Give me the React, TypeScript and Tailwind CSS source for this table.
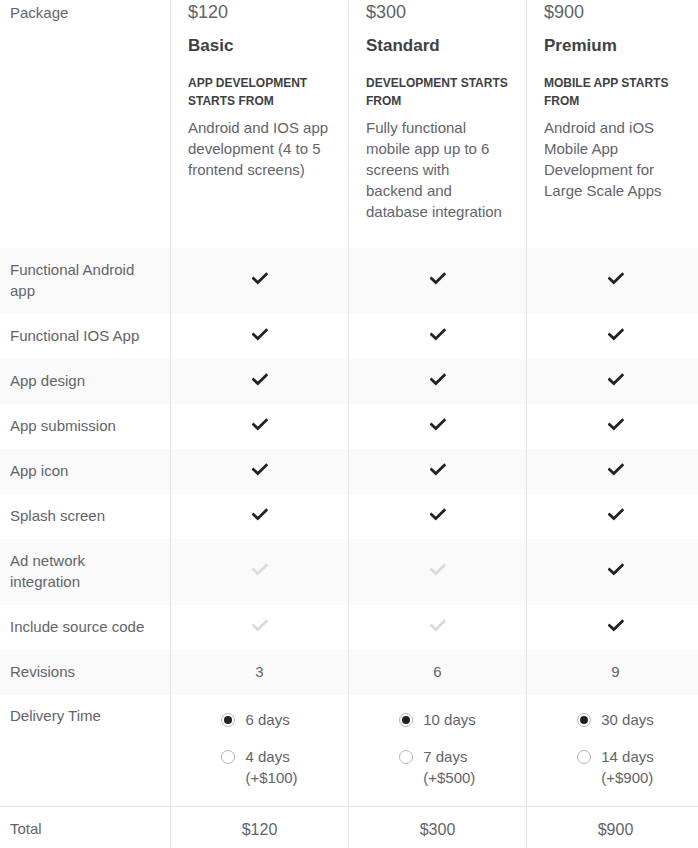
import React from "react";

type Plan = {
  price: string;
  name: string;
  tagline: string;
  desc: string;
  days: string;
  fastDays: string;
  fastPrice: string;
  revisions: string;
};

const plans: Plan[] = [
  {
    price: "$120",
    name: "Basic",
    tagline: "APP DEVELOPMENT STARTS FROM",
    desc: "Android and IOS app development (4 to 5 frontend screens)",
    days: "6 days",
    fastDays: "4 days",
    fastPrice: "(+$100)",
    revisions: "3",
  },
  {
    price: "$300",
    name: "Standard",
    tagline: "DEVELOPMENT STARTS FROM",
    desc: "Fully functional mobile app up to 6 screens with backend and database integration",
    days: "10 days",
    fastDays: "7 days",
    fastPrice: "(+$500)",
    revisions: "6",
  },
  {
    price: "$900",
    name: "Premium",
    tagline: "MOBILE APP STARTS FROM",
    desc: "Android and iOS Mobile App Development for Large Scale Apps",
    days: "30 days",
    fastDays: "14 days",
    fastPrice: "(+$900)",
    revisions: "9",
  },
];

const features: { label: string; included: boolean[] }[] = [
  { label: "Functional Android app", included: [true, true, true] },
  { label: "Functional IOS App", included: [true, true, true] },
  { label: "App design", included: [true, true, true] },
  { label: "App submission", included: [true, true, true] },
  { label: "App icon", included: [true, true, true] },
  { label: "Splash screen", included: [true, true, true] },
  { label: "Ad network integration", included: [false, false, true] },
  { label: "Include source code", included: [false, false, true] },
];

const Check = ({ on }: { on: boolean }) => (
  <svg width="16" height="13" viewBox="0 0 16 13" className={on ? "text-[#222325]" : "text-[#dadbdd]"}>
    <path d="M1.5 6.5 L5.8 10.6 L14.3 2.2" fill="none" stroke="currentColor" strokeWidth="2.8" strokeLinecap="square" />
  </svg>
);

const Radio = ({ checked }: { checked: boolean }) => (
  <span className="mt-[4px] flex h-[14px] w-[14px] shrink-0 items-center justify-center rounded-full border border-[#b5b6ba] bg-white">
    {checked && <span className="h-[8px] w-[8px] rounded-full bg-[#222325]" />}
  </span>
);

// the table is a bit wider than the window, last column gets clipped
const grid = "grid w-[704px] grid-cols-[170px_178px_178px_178px]";
const cell = "border-l border-[#e4e5e7]";

export default function App() {
  return (
    <div className="w-[698px] overflow-hidden bg-white text-[15px] leading-[21px] text-[#62646a] [font-family:'Liberation_Sans',Arial,sans-serif]">
      {/* header */}
      <div className={`${grid} h-[248px]`}>
        <div className="pl-[10px] pt-[2px]">Package</div>
        {plans.map((p) => (
          <div key={p.name} className={`${cell} pl-[17px]`}>
            <div className="text-[18px] leading-[24px]">{p.price}</div>
            <div className="mt-[11px] text-[17px] font-bold leading-[22px] text-[#404145]">{p.name}</div>
            <div className="mt-[17px] max-w-[150px] text-[12px] font-bold leading-[18px] text-[#404145]">
              {p.tagline}
            </div>
            <div className="mt-[7px] max-w-[142px]">{p.desc}</div>
          </div>
        ))}
      </div>

      {/* features */}
      {features.map((f, i) => (
        <div key={f.label} className={`${grid} ${i % 2 === 0 ? "bg-[#fafafa]" : "bg-white"}`}>
          <div className="pt-[11px] pb-[13px] pl-[10px] pr-[20px]">{f.label}</div>
          {f.included.map((on, j) => (
            <div key={j} className={`${cell} flex items-center justify-center pb-[5px]`}>
              <Check on={on} />
            </div>
          ))}
        </div>
      ))}

      {/* revisions */}
      <div className={`${grid} bg-[#fafafa]`}>
        <div className="pt-[11px] pb-[13px] pl-[10px]">Revisions</div>
        {plans.map((p) => (
          <div key={p.name} className={`${cell} flex items-center justify-center pb-[2px]`}>
            {p.revisions}
          </div>
        ))}
      </div>

      {/* delivery */}
      <div className={`${grid} h-[111px] bg-white`}>
        <div className="py-[10px] pl-[10px]">Delivery Time</div>
        {plans.map((p) => (
          <div key={p.name} className={`${cell} flex justify-center pt-[14px]`}>
            <div className="flex flex-col gap-[16px]">
              <div className="flex gap-[10px]">
                <Radio checked />
                <span>{p.days}</span>
              </div>
              <div className="flex gap-[10px]">
                <Radio checked={false} />
                <span>
                  {p.fastDays}
                  <br />
                  {p.fastPrice}
                </span>
              </div>
            </div>
          </div>
        ))}
      </div>

      {/* total */}
      <div className={`${grid} border-t border-[#e4e5e7] bg-white`}>
        <div className="pl-[10px] pt-[11px] pb-[14px]">Total</div>
        {plans.map((p) => (
          <div key={p.name} className={`${cell} flex justify-center pt-[12px] text-[16px]`}>
            {p.price}
          </div>
        ))}
      </div>
    </div>
  );
}
